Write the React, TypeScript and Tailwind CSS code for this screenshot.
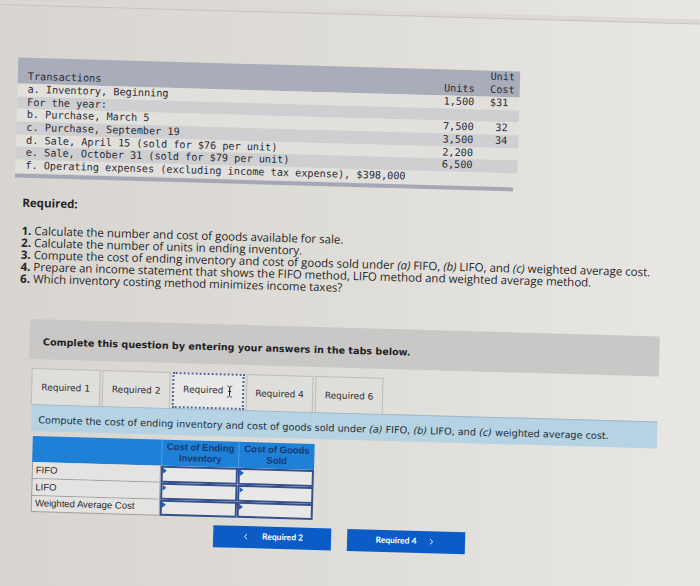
import { ChevronLeft, ChevronRight } from "lucide-react";

type Txn = { label: string; units?: string; cost?: string };

const txns: Txn[] = [
  { label: "a. Inventory, Beginning", units: "1,500", cost: "$31" },
  { label: "For the year:" },
  { label: "b. Purchase, March 5", units: "7,500", cost: "32" },
  { label: "c. Purchase, September 19", units: "3,500", cost: "34" },
  { label: "d. Sale, April 15 (sold for $76 per unit)", units: "2,200" },
  { label: "e. Sale, October 31 (sold for $79 per unit)", units: "6,500" },
  { label: "f. Operating expenses (excluding income tax expense), $398,000" },
];

const tabs = [
  { label: "Required 1", w: "w-[69px]" },
  { label: "Required 2", w: "w-[68px]" },
  { label: "Required 3", w: "w-[72px]", active: true },
  { label: "Required 4", w: "w-[67px]" },
  { label: "Required 6", w: "w-[68px]" },
];

const methods = ["FIFO", "LIFO", "Weighted Average Cost"];

function TransactionsTable() {
  return (
    <div className="ml-[20px] mt-[52px] w-[502px] font-['DejaVu_Sans_Mono',monospace] text-[10.2px] text-[#2b2c38]">
      <div className="grid h-[26px] grid-cols-[407px_50px_45px] items-end bg-[#a9acb9] pb-[1px] leading-[12.5px]">
        <span className="pl-[10px]">Transactions</span>
        <span className="text-right">Units</span>
        <span className="pr-[5px] text-right">
          Unit
          <br />
          Cost
        </span>
      </div>
      {txns.map((t, i) => (
        <div
          key={t.label}
          className={`grid h-[12.7px] grid-cols-[407px_50px_45px] leading-[12.7px] ${
            i % 2 === 1 ? "bg-[#cfcfd1]" : "bg-[#e1e0dd]"
          }`}
        >
          <span className="whitespace-pre pl-[10px]">{t.label}</span>
          <span className="text-right">{t.units}</span>
          <span className="pr-[11px] text-right">{t.cost}</span>
        </div>
      ))}
      <div className="mt-[1px] h-[4px] w-[498px] bg-[#a5a8b4]" />
    </div>
  );
}

function Requirements() {
  return (
    <div className="ml-[28px] font-['Open_Sans',sans-serif] text-[#262626]">
      <p className="mt-[18px] text-[11.5px] font-bold leading-[14px]">Required:</p>
      <ol className="mt-[15px] text-[11.5px] leading-[12px]">
        <li>
          <b>1.</b> Calculate the number and cost of goods available for sale.
        </li>
        <li>
          <b>2.</b> Calculate the number of units in ending inventory.
        </li>
        <li>
          <b>3.</b> Compute the cost of ending inventory and cost of goods sold under <i>(a)</i> FIFO,{" "}
          <i>(b)</i> LIFO, and <i>(c)</i> weighted average cost.
        </li>
        <li>
          <b>4.</b> Prepare an income statement that shows the FIFO method, LIFO method and weighted average method.
        </li>
        <li>
          <b>6.</b> Which inventory costing method minimizes income taxes?
        </li>
      </ol>
    </div>
  );
}

// text cursor hovering over the active tab
function IBeam() {
  return (
    <svg width="7" height="14" viewBox="0 0 7 14" className="ml-[3px]">
      <path d="M1 1.5c1.2 0 2.5.4 2.5 1.5v8c0 1.1-1.3 1.5-2.5 1.5M6 1.5c-1.2 0-2.5.4-2.5 1.5v8c0 1.1 1.3 1.5 2.5 1.5M2 7h3" stroke="#fff" strokeWidth="2.2" fill="none" />
      <path d="M1 1.5c1.2 0 2.5.4 2.5 1.5v8c0 1.1-1.3 1.5-2.5 1.5M6 1.5c-1.2 0-2.5.4-2.5 1.5v8c0 1.1 1.3 1.5 2.5 1.5M2 7h3" stroke="#222" strokeWidth="0.9" fill="none" />
    </svg>
  );
}

function QuestionTabs() {
  return (
    <div className="font-['DejaVu_Sans',sans-serif]">
      <div className="ml-[39px] mt-[34px] flex h-[40px] w-[630px] items-center bg-[#c9c8c6] pl-[13.5px] pt-[7px] text-[9.6px] font-bold text-[#1f1f24]">
        Complete this question by entering your answers in the tabs below.
      </div>

      <div className="ml-[42px] mt-[9px] flex h-[36px] gap-[2px]">
        {tabs.map((t) =>
          t.active ? (
            <div
              key={t.label}
              className={`${t.w} flex items-center justify-center border-2 border-dotted border-[#55699a] bg-[#e9e9e7] text-[9px] text-[#2e2e33]`}
            >
              Required
              <IBeam />
            </div>
          ) : (
            <div
              key={t.label}
              className={`${t.w} flex items-center justify-center border border-b-0 border-[#bdbcb9] bg-[#dfdedb] pt-[2px] text-[9px] text-[#2e2e33]`}
            >
              {t.label}
            </div>
          )
        )}
      </div>

      <div className="ml-[43px] flex h-[27px] w-[626px] items-center border-t border-[#9cb8c9] bg-[#b6d3e3] pl-[7px] pt-[4px] text-[9.7px] text-[#22303a]">
        <span>
          Compute the cost of ending inventory and cost of goods sold under <i>(a)</i> FIFO, <i>(b)</i> LIFO, and{" "}
          <i>(c)</i> weighted average cost.
        </span>
      </div>
    </div>
  );
}

function InputCell() {
  return (
    <div className="relative border-2 border-[#34508e] bg-[#e8e8e6]">
      <svg width="4" height="6" viewBox="0 0 4 6" className="absolute left-0 top-0">
        <path d="M0 0l4 3-4 3z" fill="#1f5fc4" />
      </svg>
    </div>
  );
}

function CostTable() {
  return (
    <div className="ml-[45px] mt-[5px] w-[282px] font-['Liberation_Sans',Arial,sans-serif] text-[9.5px]">
      <div className="grid h-[26px] grid-cols-[129px_77px_76px] bg-[#1f80d8] text-center font-bold leading-[10.5px] text-[#173a6e]">
        <span />
        <span className="flex items-center justify-center border-l border-[#4c9ce6]">
          Cost of Ending
          <br />
          Inventory
        </span>
        <span className="flex items-center justify-center border-l border-[#4c9ce6]">
          Cost of Goods
          <br />
          Sold
        </span>
      </div>
      {methods.map((m, i) => (
        <div key={m} className={`grid grid-cols-[129px_77px_76px] ${i === 2 ? "h-[16px]" : "h-[17px]"}`}>
          <span className="flex items-center border border-t-0 border-[#9e9e9e] bg-[#e4e3e1] pl-[3px] text-[#2a2a2a]">
            {m}
          </span>
          <InputCell />
          <InputCell />
        </div>
      ))}
    </div>
  );
}

function NavButtons() {
  return (
    <div className="ml-[228px] mt-[8px] flex gap-[16px] font-['Lato',sans-serif] text-[8.5px] font-bold text-white">
      <button type="button" className="flex h-[22px] w-[118px] items-center justify-center gap-[12px] bg-[#0c5cc7]">
        <ChevronLeft size={9} strokeWidth={2.5} />
        Required 2
      </button>
      <button type="button" className="flex h-[22px] w-[118px] items-center justify-center gap-[11px] bg-[#0c5cc7]">
        Required 4
        <ChevronRight size={9} strokeWidth={2.5} />
      </button>
    </div>
  );
}

export default function App() {
  return (
    <div className="h-[586px] w-[700px] overflow-hidden bg-gradient-to-r from-[#d8d5d0] via-[#dfddd8] to-[#e8e7e3]">
      <div className="w-[700px] origin-top-left rotate-[1.6deg]">
        <div className="h-[5px] border-b border-[#c8c5c0] bg-[#dcd9d4]" />
        <TransactionsTable />
        <Requirements />
        <QuestionTabs />
        <CostTable />
        <NavButtons />
      </div>
    </div>
  );
}
